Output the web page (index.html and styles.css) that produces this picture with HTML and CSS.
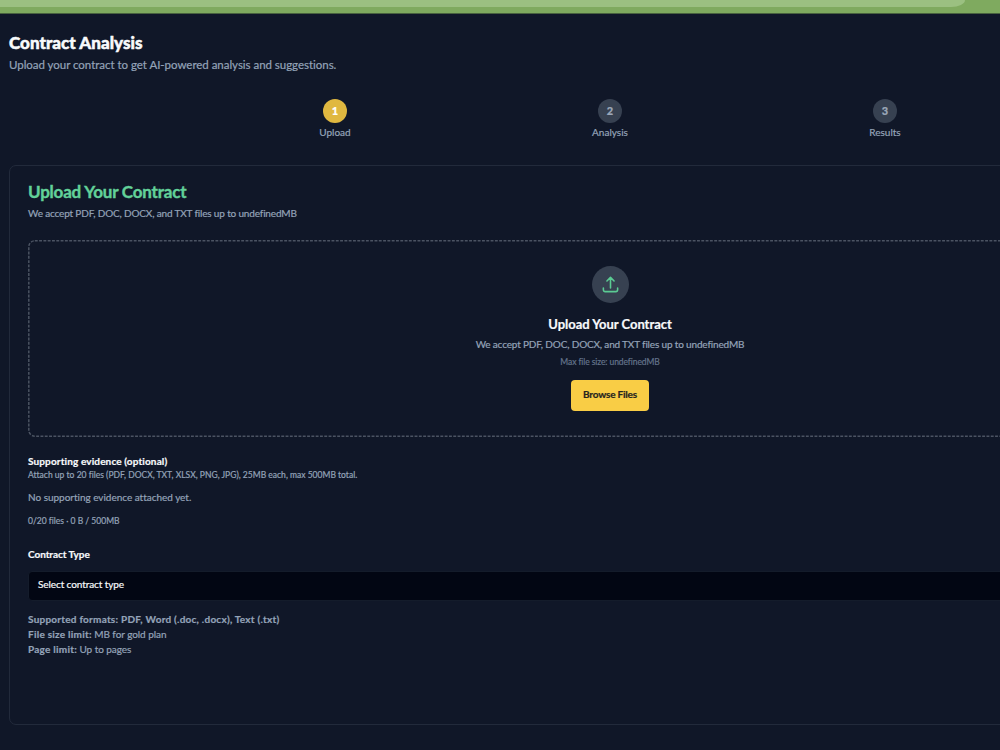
FILE: index.html
```
<!DOCTYPE html>
<html lang="en">
<head>
    <meta charset="UTF-8">
    <meta name="viewport" content="width=device-width, initial-scale=1.0">
    <title>Contract Analysis</title>
    <link rel="stylesheet" href="styles.css">
</head>
<body>
    <div class="top-bar">
        <div class="top-bar-inner"></div>
    </div>

    <main class="page">
        <h1>Contract Analysis</h1>
        <p class="subtitle">Upload your contract to get AI-powered analysis and suggestions.</p>

        <div class="steps">
            <div class="step active">
                <span class="step-number">1</span>
                <span class="step-label">Upload</span>
            </div>
            <div class="step">
                <span class="step-number">2</span>
                <span class="step-label">Analysis</span>
            </div>
            <div class="step">
                <span class="step-number">3</span>
                <span class="step-label">Results</span>
            </div>
        </div>

        <section class="card">
            <h2>Upload Your Contract</h2>
            <p class="card-text">We accept PDF, DOC, DOCX, and TXT files up to undefinedMB</p>

            <div class="dropzone">
                <!-- dashed outline -->
                <svg class="dropzone-border" width="1164" height="197">
                    <rect x="0.8" y="0.8" width="1162.4" height="195.4" rx="6"/>
                </svg>
                <div class="upload-icon">
                    <svg width="19" height="19" viewBox="0 0 24 24" fill="none" stroke="currentColor" stroke-width="2" stroke-linecap="round" stroke-linejoin="round">
                        <path d="M3 16.5v2.25A2.25 2.25 0 0 0 5.25 21h13.5A2.25 2.25 0 0 0 21 18.75V16.5"/>
                        <path d="M7.5 7.5L12 3l4.5 4.5M12 3v13.5"/>
                    </svg>
                </div>
                <h3>Upload Your Contract</h3>
                <p class="drop-text">We accept PDF, DOC, DOCX, and TXT files up to undefinedMB</p>
                <p class="drop-limit">Max file size: undefinedMB</p>
                <button class="browse-btn" type="button">Browse Files</button>
            </div>

            <div class="evidence">
                <h4>Supporting evidence (optional)</h4>
                <p class="evidence-info">Attach up to 20 files (PDF, DOCX, TXT, XLSX, PNG, JPG), 25MB each, max 500MB total.</p>
                <p class="evidence-empty">No supporting evidence attached yet.</p>
                <p class="evidence-count">0/20 files · 0 B / 500MB</p>
            </div>

            <h4 class="type-label">Contract Type</h4>
            <div class="select">Select contract type</div>

            <div class="limits">
                <p><strong>Supported formats: PDF, Word (.doc, .docx), Text (.txt)</strong></p>
                <p><strong>File size limit:</strong> MB for gold plan</p>
                <p><strong>Page limit:</strong> Up to pages</p>
            </div>
        </section>
    </main>
</body>
</html>
```
FILE: styles.css
```
* {
    box-sizing: border-box;
}
body {
    margin: 0;
    height: 750px;
    overflow: hidden;
    background-color: #101728;
    color: #f8fafc;
    font-family: Lato, sans-serif;
    font-variant-ligatures: none;
    -webkit-text-stroke: 0.2px;
}
h1, h2, h3, h4, p {
    margin: 0;
}
.top-bar {
    height: 14px;
    background-color: #7faa5f;
    border-bottom: 1px solid #48623f;
}
.top-bar-inner {
    width: 965px;
    height: 7px;
    background-color: #9bc081;
    border-bottom-right-radius: 14px 7px;
}
.page {
    width: 1201px;
    margin-left: 9px;
    padding-top: 18px;
}
h1 {
    font-size: 17px;
    line-height: 22px;
    font-weight: 900;
    letter-spacing: 0.04px;
    -webkit-text-stroke: 0.5px;
}
.subtitle {
    margin-top: 3px;
    font-size: 11.5px;
    line-height: 16px;
    letter-spacing: -0.03px;
    color: #94a3b8;
}
.steps {
    display: grid;
    grid-template-columns: repeat(3, 275px);
    justify-content: center;
    margin-top: 26px;
    padding-left: 1px;
}
.step {
    display: flex;
    flex-direction: column;
    align-items: center;
}
.step-number {
    width: 24px;
    height: 24px;
    border-radius: 50%;
    background-color: #374151;
    color: #9ca8b9;
    font-size: 11px;
    font-weight: 900;
    line-height: 23px;
    text-align: center;
}
.active .step-number {
    background-color: #e0b840;
    color: #fff;
}
.step-label {
    margin-top: 3px;
    font-size: 10px;
    line-height: 13px;
    color: #94a3b8;
}
.card {
    height: 560px;
    margin-top: 26px;
    padding: 15px 18px;
    border: 1px solid #222a3b;
    border-radius: 7px;
}
h2 {
    font-size: 17px;
    line-height: 22px;
    font-weight: 700;
    letter-spacing: -0.2px;
    color: #62d199;
    -webkit-text-stroke: 0.4px;
}
.card-text {
    margin-top: 3px;
    font-size: 10px;
    line-height: 14px;
    letter-spacing: -0.16px;
    color: #94a3b8;
}
.dropzone {
    position: relative;
    display: flex;
    flex-direction: column;
    align-items: center;
    height: 197px;
    margin-top: 20px;
    padding: 26px 0 0 1px;
}
.dropzone-border {
    position: absolute;
    top: 0;
    left: 0;
    fill: none;
    stroke: #4b5362;
    stroke-width: 1.5;
    stroke-dasharray: 2.9 1.4;
}
.upload-icon {
    display: flex;
    align-items: center;
    justify-content: center;
    width: 37px;
    height: 37px;
    border-radius: 50%;
    background-color: #374151;
    color: #5bcb93;
}
h3 {
    margin-top: 13px;
    font-size: 13px;
    line-height: 16px;
    font-weight: 700;
    letter-spacing: -0.03px;
}
.drop-text {
    margin-top: 5px;
    font-size: 10px;
    line-height: 14px;
    letter-spacing: -0.16px;
    color: #94a3b8;
}
.drop-limit {
    margin-top: 5px;
    font-size: 8.5px;
    line-height: 12px;
    letter-spacing: -0.08px;
    color: #64748b;
}
.browse-btn {
    width: 78px;
    height: 31px;
    margin-top: 12px;
    padding: 0 0 3px;
    border: none;
    border-radius: 4px;
    background-color: #f9cd45;
    color: #27251f;
    font-family: inherit;
    font-size: 10px;
    font-weight: 700;
    letter-spacing: -0.2px;
}
.evidence {
    margin-top: 17px;
    color: #94a3b8;
}
h4 {
    font-size: 10px;
    line-height: 14px;
    font-weight: 700;
    letter-spacing: -0.05px;
    color: #f8fafc;
}
.evidence h4 {
    letter-spacing: 0.13px;
}
.evidence-info {
    margin-top: 1px;
    font-size: 8.5px;
    line-height: 13px;
    letter-spacing: 0.01px;
}
.evidence-empty {
    margin-top: 8px;
    font-size: 10px;
    line-height: 14px;
    letter-spacing: -0.02px;
}
.evidence-count {
    margin-top: 11px;
    font-size: 8.5px;
    line-height: 12px;
}
.type-label {
    margin-top: 20px;
}
.select {
    height: 30px;
    margin-top: 10px;
    padding-left: 9px;
    border: 1px solid #141c2b;
    border-radius: 4px;
    background-color: #020613;
    font-size: 10px;
    line-height: 25px;
    letter-spacing: -0.09px;
}
.limits {
    margin-top: 11px;
    font-size: 10px;
    line-height: 15px;
    letter-spacing: -0.06px;
    color: #94a3b8;
}
.limits strong {
    letter-spacing: 0.24px;
}
```
